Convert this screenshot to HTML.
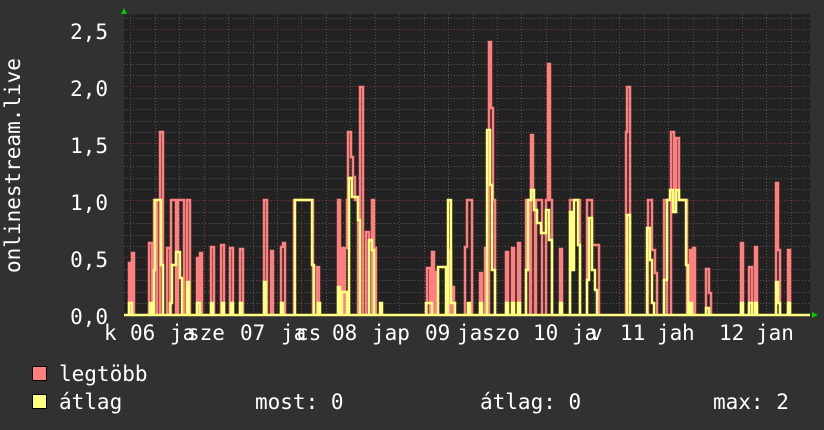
<!DOCTYPE html>
<html><head><meta charset="utf-8"><style>
html,body{margin:0;padding:0;background:#313131;}
svg{display:block}
text{font-family:"DejaVu Sans Mono","Liberation Mono",monospace;fill:#fff;}
</style></head><body>
<svg width="824" height="430" viewBox="0 0 824 430" xmlns="http://www.w3.org/2000/svg">
<rect width="824" height="430" fill="#313131"/>
<rect x="124" y="14" width="686" height="302" fill="#222"/>
<g stroke="#555" stroke-width="1" stroke-dasharray="1,2">
<path d="M124 303.5H810M124 292.5H810M124 280.5H810M124 269.5H810M124 246.5H810M124 235.5H810M124 223.5H810M124 212.5H810M124 189.5H810M124 178.5H810M124 166.5H810M124 155.5H810M124 132.5H810M124 121.5H810M124 109.5H810M124 98.5H810M124 75.5H810M124 64.5H810M124 52.5H810M124 41.5H810M124 18.5H810"/>
<path d="M130.5 14V316M155.5 14V316M179.5 14V316M228.5 14V316M253.5 14V316M277.5 14V316M326.5 14V316M350.5 14V316M375.5 14V316M424.5 14V316M448.5 14V316M473.5 14V316M521.5 14V316M546.5 14V316M570.5 14V316M619.5 14V316M644.5 14V316M668.5 14V316M717.5 14V316M742.5 14V316M766.5 14V316"/>
</g>
<g stroke="#7a3a3a" stroke-width="1" stroke-dasharray="1,2">
<path d="M124 257.5H810M124 200.5H810M124 143.5H810M124 86.5H810M124 29.5H810"/>
<path d="M204.5 14V316M301.5 14V316M399.5 14V316M497.5 14V316M594.5 14V316M693.5 14V316M791.5 14V316"/>
</g>
<path fill="none" stroke="#ff7f7f" stroke-width="2.5" d="M129 315V263H131V315M132 315V253H134V315M149 315V243H152V315M154 315V200H157V315M160 315V132H163V315M167 315V248H170V315M171 315V200H176V315M178 315V200H184V315M187 315V200H190V315M197 315V258H199V315M200 315V253H202V315M211 315V247H214V315M221 315V245H224V315M230 315V248H233V315M240 315V249H243V315M264 315V200H267V315M271 315V251H273V315M281 315V247H283V243H285V315M294 315V200H313V315M317 315V267H319V315M338 315V200H340V315M341 315V248H343V315M345 315V248H347V200H348V132H351V157H353V177H355V200H358V315M360 315V87H363V315M366 315V232H369V315M372 315V200H374V248H376V315M427 315V268H430V315M432 315V252H434V315M436 315V272H438V315M449 315V250H451V315M452 315V287H454V315M465 315V247H467V200H472V315M480 315V273H482V315M485 315V248H487V315M489 315V42H491V108H493V200H495V315M506 315V252H508V315M512 315V248H514V315M518 315V243H520V315M526 315V200H530V315M531 315V135H533V200H535V315M536 315V200H542V315M546 315V200H548V64H550V200H552V315M560 315V249H562V315M570 315V200H580V315M587 315V200H592V245H599V315M626 315V132H627V87H630V315M648 315V200H652V250H655V273H657V315M664 315V200H667V315M671 315V132H674V212H676V138H679V200H687V315M690 315V250H692V315M693 315V248H695V315M706 315V269H709V293H711V315M741 315V243H743V315M749 315V267H752V315M755 315V247H757V315M776 315V183H778V250H780V315M788 315V250H790V315"/>
<path fill="none" stroke="#ffff80" stroke-width="2.5" d="M124 315H810M129 315V303H132V315M150 315V303H152V315M154 315V270H155V200H161V265H163V315M170 315V303H172V265H176V252H180V278H182V315M187 315V282H189V315M197 315V303H200V315M211 315V303H213V315M222 315V303H224V315M231 315V303H233V315M240 315V303H242V315M264 315V282H266V315M281 315V303H283V315M295 315V200H312V265H314V315M318 315V303H320V315M338 315V287H340V315M342 315V292H347V315M349 315V178H352V197H358V220H360V315M369 315V240H372V250H374V315M380 315V303H382V315M426 315V303H432V315M438 315V267H446V315M448 315V200H451V303H455V315M468 315V303H470V315M480 315V303H482V315M487 315V130H490V185H492V270H495V315M506 315V303H508V315M512 315V303H514V315M518 315V303H520V315M526 315V270H528V200H531V190H534V210H537V223H541V233H546V210H549V240H552V315M560 315V303H562V315M570 315V212H572V270H574V200H578V245H580V315M587 315V280H589V218H592V270H595V290H597V315M627 315V215H630V315M647 315V228H650V260H652V303H654V315M664 315V280H667V200H670V190H673V212H676V190H679V200H686V265H688V315M690 315V303H692V315M706 315V308H709V315M741 315V303H743V315M749 315V303H752V315M755 315V303H757V315M776 315V282H778V303H780V315M788 315V303H790V315"/>
<polygon points="121,14 127,14 124,8" fill="#0c0"/>
<polygon points="812,312 812,318 818,315" fill="#0c0"/>
<g font-size="21" text-anchor="end">
<text x="108" y="39">2,5</text>
<text x="108" y="96">2,0</text>
<text x="108" y="153">1,5</text>
<text x="108" y="210">1,0</text>
<text x="108" y="267">0,5</text>
<text x="108" y="324">0,0</text>
</g>
<text transform="translate(20,273) rotate(-90)" font-size="21">onlinestream.live</text>
<g font-size="21">
<text x="104" y="340">k</text>
<text x="130" y="340">06</text>
<text x="170" y="340">ja</text>
<text x="187" y="340">sze</text>
<text x="240" y="340">07</text>
<text x="281" y="340">ja</text>
<text x="296" y="340">cs</text>
<text x="332" y="340">08</text>
<text x="372" y="340">jap</text>
<text x="425" y="340">09</text>
<text x="457" y="340">ja</text>
<text x="482" y="340">szo</text>
<text x="533" y="340">10</text>
<text x="572" y="340">ja</text>
<text x="590" y="340">v</text>
<text x="620" y="340">11</text>
<text x="657" y="340">ja</text>
<text x="682" y="340">h</text>
<text x="719" y="340">12</text>
<text x="756" y="340">jan</text>
</g>
<rect x="32.5" y="366.5" width="14" height="14" fill="#ff7f7f" stroke="#000"/>
<rect x="32.5" y="394.5" width="14" height="14" fill="#ffff80" stroke="#000"/>
<g font-size="21">
<text x="59" y="381">legtöbb</text>
<text x="59" y="409">átlag</text>
<text x="255" y="409">most: 0</text>
<text x="480" y="409">átlag: 0</text>
<text x="713" y="409">max: 2</text>
</g>
</svg>
</body></html>
